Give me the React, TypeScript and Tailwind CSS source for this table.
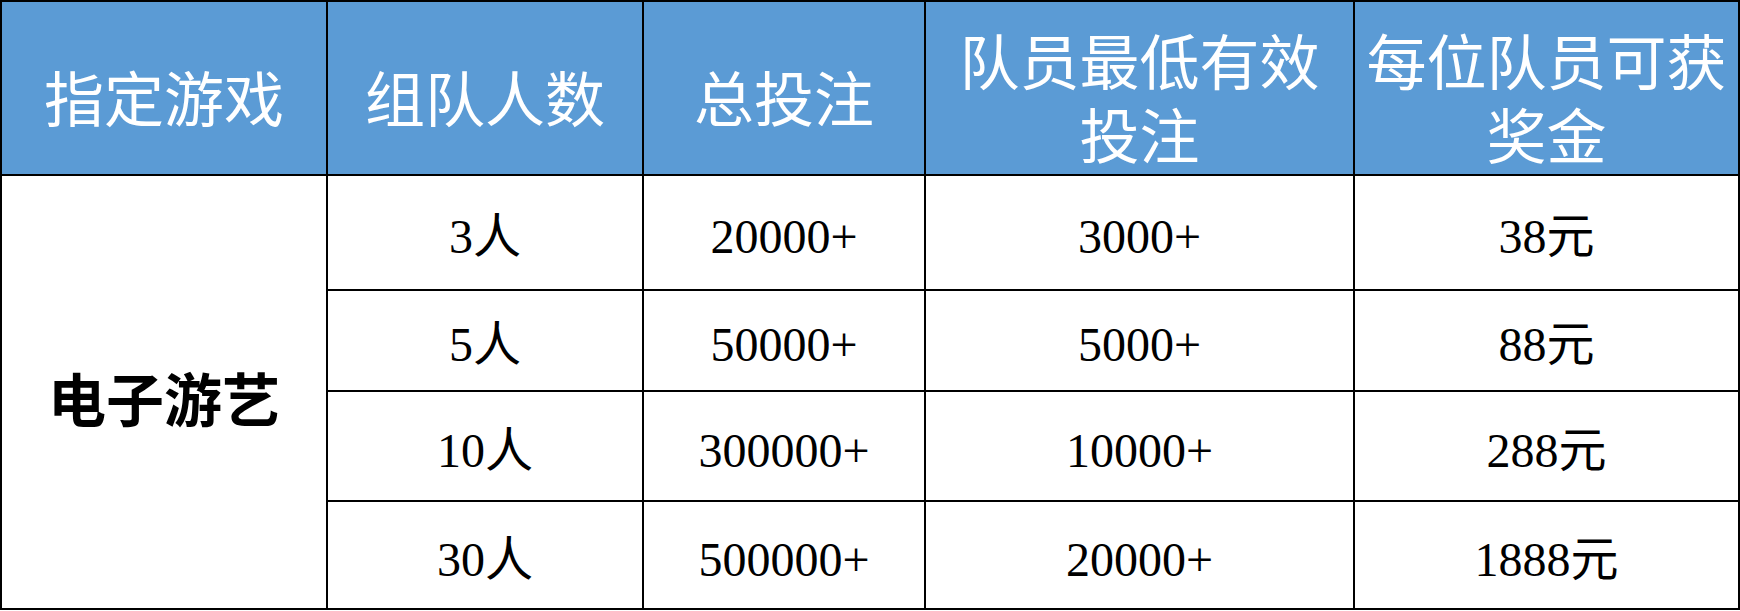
import React from "react";

const rows = [
  ["3人", "20000+", "3000+", "38元"],
  ["5人", "50000+", "5000+", "88元"],
  ["10人", "300000+", "10000+", "288元"],
  ["30人", "500000+", "20000+", "1888元"],
];

const rowH = ["h-[115px]", "h-[101px]", "h-[110px]", "h-[108px]"];

export default function App() {
  const head =
    "bg-[#5b9bd5] text-white border-r-2 border-b-2 border-black flex flex-col items-center justify-center text-center pt-[15px] text-[60px] leading-[74px] font-['Noto_Sans_CJK_SC',sans-serif]";
  const body =
    "border-r-2 border-b-2 border-black flex items-center justify-center text-center pt-[9px] text-[48px] leading-none text-black";
  return (
    <div className="w-[1740px] h-[611px] bg-white font-['Liberation_Serif','Noto_Sans_CJK_SC',serif]">
      <div className="grid grid-cols-[326px_316px_282px_429px_385px] grid-rows-[174px_115px_101px_110px_108px] border-t-2 border-l-2 border-black w-[1740px]">
        <div className={head}>指定游戏</div>
        <div className={head}>组队人数</div>
        <div className={head}>总投注</div>
        <div className={head}>
          <span>队员最低有效</span>
          <span>投注</span>
        </div>
        <div className={head}>
          <span>每位队员可获</span>
          <span>奖金</span>
        </div>
        <div className="row-span-4 border-r-2 border-b-2 border-black flex items-center justify-center pt-[10px] text-[58px] font-bold text-black leading-none font-['Noto_Sans_CJK_SC',sans-serif]">
          电子游艺
        </div>
        {rows.map((r, i) =>
          r.map((c, j) => (
            <div key={`${i}-${j}`} className={`${body} ${rowH[i]}`}>
              {c}
            </div>
          ))
        )}
      </div>
    </div>
  );
}
